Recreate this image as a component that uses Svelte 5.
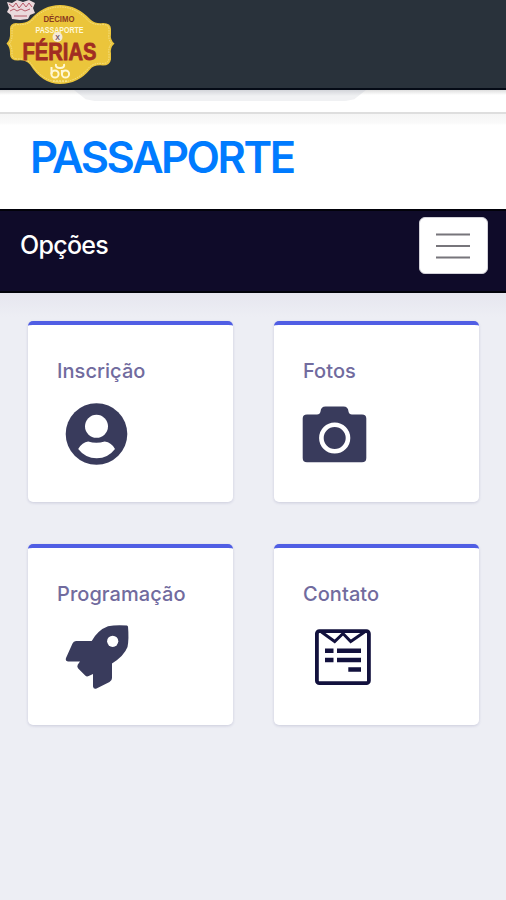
<script>
	const options = [
		{ label: 'Inscrição', icon: 'user' },
		{ label: 'Fotos', icon: 'camera' },
		{ label: 'Programação', icon: 'rocket' },
		{ label: 'Contato', icon: 'form' }
	];

	let open = $state(false);
</script>

<div class="page">
	<header class="topbar">
		<svg class="logo" width="120" height="88" viewBox="0 0 120 88" role="img" aria-label="Décimo Passaporte Férias">
			<path
				d="M6.500 43.500q4-4 3.500-10v-5q0-5 6-5.500 8 1 14-3Q43 5 60 5t31 15q5 4 12 3 8 0 8 6v5q-1 6 3.500 9.500-4.500 4-3.500 10v6q-1 6-8 6-9-1-13 4Q78 84 60 84T30 64.500q-5-5-12-4-8 0-8-6v-2q0-5-3.500-9Z"
				fill="#ebc53b"
			/>
			<path
				d="M9.500 43.500q3-4 2.500-10v-5q0-3 5-4 8 1 14-3Q44 7 60 7t29 14.500q6 4 14 3 6 0 6 5v4q-1 6 2.500 10-3.500 4-2.500 10v5q-1 5-6 5-9-1-14 4Q77 82 60 82T31 63.500q-5-5-13-4.500-6 0-6-5v-2q0-5-2.500-8.500Z"
				fill="none"
				stroke="#f8e695"
				stroke-width="0.8"
				stroke-dasharray="1.5 1"
			/>
			<path d="M7 2l5 1 5-3 6 2 6-2 6 3-2 5 2 5-5 2-2 4-8 1-8-1-1-4-4-3 2-4Z" fill="#ead9dc" />
			<path d="M9 4l4 3 3-4 3 5 4-5 3 4 3-4 3 4M10 11l4-2 3 2 4-2 4 2 5-2M14 16h13" fill="none" stroke="#b65a68" />
			<circle cx="57.5" cy="37" r="5" fill="#f5ead8" />
			<g class="logo-text" text-anchor="middle">
				<text x="59" y="21.5" font-size="9.5" textLength="31" lengthAdjust="spacingAndGlyphs" fill="#8b3b20">DÉCIMO</text>
				<text x="59.500" y="32.5" font-size="9.5" textLength="48" lengthAdjust="spacingAndGlyphs" fill="#fff8d9">PASSAPORTE</text>
				<text x="57.5" y="39.5" font-size="7" fill="#75566b">X</text>
				<text class="ferias" x="59.5" y="60" font-size="24" textLength="74" lengthAdjust="spacingAndGlyphs" fill="#a12d22">FÉRIAS</text>
			</g>
			<g fill="none" stroke="#fff7d5" stroke-width="2">
				<circle cx="55" cy="74" r="3.6" />
				<circle cx="65.5" cy="74" r="3.6" />
				<path d="M51.500 74v-7M61.900 74v-4M56 64q-1 4 4 4t4-4" />
			</g>
			<path d="M53 81h15" stroke="#fff0a5" stroke-dasharray="2 1" />
		</svg>
	</header>

	<div class="strip"><div class="address"></div></div>

	<div class="brand"><h1>PASSAPORTE</h1></div>

	<nav class="navbar">
		<span class="nav-title">Opções</span>
		<button type="button" class="toggler" aria-label="Menu" aria-expanded={open} onclick={() => (open = !open)}>
			<svg width="34" height="26" viewBox="0 0 34 26" aria-hidden="true">
				<path d="M0 1.500h34M0 13h34M0 24.500h34" stroke="#77757b" stroke-width="2.2" />
			</svg>
		</button>
	</nav>

	<main class="grid">
		{#each options as option (option.icon)}
			<section class="card">
				<h2>{option.label}</h2>
				<svg class="icon" width="80" height="70" viewBox="0 0 80 70" aria-hidden="true">
					{#if option.icon === 'user'}
						<circle cx="39.5" cy="34" r="30.8" />
						<circle cx="39.5" cy="26.3" r="11.5" class="cut" />
						<path class="cut" d="M21.200 49q4-7 10-7.500 8 2.500 16.500 0 7 1 10.300 7.500-7 9.300-18.300 9.300T21.200 49Z" />
					{:else if option.icon === 'camera'}
						<path d="M4 14.500h10q3 0 3.500-3 .5-5 5-5h18q4.500 0 5 5 .5 3 3.500 3h10q4.300 0 4.300 4V58q0 4.300-4.300 4.300H4q-4.300 0-4.300-4.300V18.500q0-4 4.300-4Z" />
						<circle cx="31.7" cy="38" r="13.3" fill="none" stroke="#fff" stroke-width="4.6" />
					{:else if option.icon === 'rocket'}
						<path d="M70 2.500Q59 1.500 51 3.300 41 7 34.700 18H19q-2.500 0-3.500 2.500L9 35q-1 3 2 3.500h12l-2.300 3.300q-1 2 .5 3.700l7 7q1.500 1.500 3.500.500L36 51v12.500q.5 3 3.500 2l13-6.500q2.500-1.200 2.500-4V40.500Q67 33 70.500 24q1.600-8 .5-20.500Z" />
						<circle class="cut" cx="55.7" cy="18.3" r="5.6" />
					{:else}
						<rect class="sheet" x="13.9" y="8.2" width="52" height="52" rx="2.5" />
						<path class="sheet thin" d="M18.500 9l13.200 9.500 8.300-8 7.700 8L61.500 9" />
						<path class="sheet lines" d="M22 27.800h8.500M34 27.800h24M22 37h8.500M34 37h24M45.300 46.500H58" />
					{/if}
				</svg>
			</section>
		{/each}
	</main>
</div>

<style>
	:global(body) {
		margin: 0;
		background: #edeef4;
	}

	.page {
		min-height: 900px;
		background: #edeef4;
		font-family: Inter, 'Liberation Sans', sans-serif;
	}

	.topbar {
		box-sizing: border-box;
		height: 90px;
		background: #29323b;
		border-bottom: 2px solid #050b16;
	}

	.logo {
		display: block;
	}

	.logo-text {
		font-family: 'Liberation Sans Narrow', 'Liberation Sans', sans-serif;
		font-weight: 700;
	}

	.ferias {
		stroke: #a12d22;
		stroke-width: 0.8;
	}

	.strip {
		box-sizing: border-box;
		height: 24px;
		background: linear-gradient(#dedede, #fff 5px);
		border-bottom: 2px solid #dedede;
	}

	.address {
		width: 292px;
		height: 11px;
		margin-left: 74px;
		background: linear-gradient(#d3d5da, #f0f1f3 6px);
		clip-path: polygon(0 0, 100% 0, 96% 85%, 93% 100%, 7% 100%, 4% 85%);
	}

	.brand {
		box-sizing: border-box;
		height: 95px;
		padding: 16px 30px;
		background: linear-gradient(#f5f5f5, #fafafa 9px, #fff 11px);
	}

	h1 {
		margin: 0;
		font-size: 43.5px;
		line-height: 54px;
		font-weight: 600;
		letter-spacing: -2.5px;
		color: #007bff;
	}

	.navbar {
		box-sizing: border-box;
		display: flex;
		justify-content: space-between;
		align-items: flex-start;
		height: 84px;
		padding: 6px 18px 0 20px;
		background: #0f0b29;
		border-top: 2px solid #02020a;
		border-bottom: 2px solid #02020a;
	}

	.nav-title {
		margin-top: 13px;
		font-size: 25px;
		line-height: 30px;
		font-weight: 500;
		letter-spacing: -0.7px;
		color: #fff;
	}

	.toggler {
		display: flex;
		align-items: center;
		justify-content: center;
		width: 69px;
		height: 57px;
		padding: 0 1px 0 0;
		background: #fff;
		border: 1px solid #d2d1d8;
		border-radius: 6px;
	}

	.grid {
		display: grid;
		grid-template-columns: 205px 205px;
		gap: 42px 41px;
		padding: 28px;
		background: linear-gradient(#e6e6ef, #edeef4 24px);
	}

	.card {
		box-sizing: border-box;
		height: 181px;
		padding: 33px 0 0 29px;
		background: #fff;
		border-top: 4px solid #505ee4;
		border-radius: 5px;
		box-shadow: 0 1px 3px rgba(70, 72, 130, 0.2);
	}

	h2 {
		margin: 0 0 16px;
		font-size: 20px;
		line-height: 26px;
		font-weight: 500;
		letter-spacing: 0.05px;
		color: #716b9e;
	}

	.icon {
		display: block;
		fill: #393b5c;
		overflow: visible;
	}

	.cut {
		fill: #fff;
	}

	.sheet {
		fill: none;
		stroke: #12113d;
		stroke-width: 3.8;
	}

	.thin {
		stroke-width: 3;
	}

	.lines {
		stroke-width: 4.4;
	}
</style>
